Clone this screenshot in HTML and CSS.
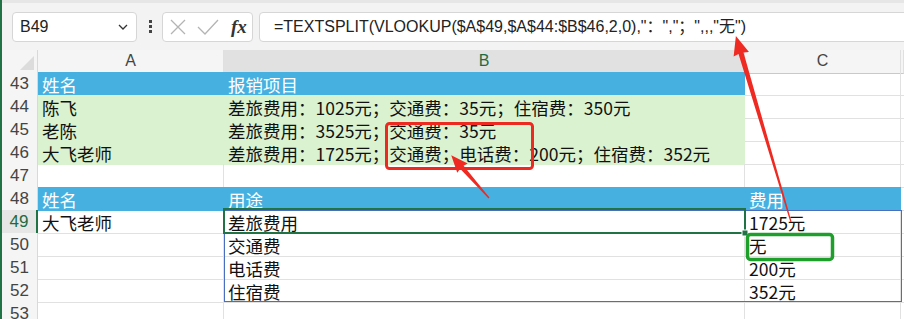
FILE: index.html
```html
<!DOCTYPE html>
<html lang="zh-CN">
<head>
    <meta charset="UTF-8">
    <title>TEXTSPLIT</title>
    <link rel="stylesheet" href="styles.css">
</head>
<body>
    <div class="app">
        <div class="formula-bar">
            <div class="name-box">
                <span>B49</span>
                <svg width="10" height="6" viewBox="0 0 10 6"><path d="M1 1 L5 5 L9 1" fill="none" stroke="#333" stroke-width="1.3"/></svg>
            </div>
            <div class="bar-dots"><i></i><i></i><i></i></div>
            <div class="fx-box">
                <svg width="16" height="16" viewBox="0 0 16 16"><path d="M1 1 L15 15 M15 1 L1 15" stroke="#b4b4b4" stroke-width="1.3"/></svg>
                <svg width="22" height="16" viewBox="0 0 22 16"><path d="M1 8 L8 15 L21 1" fill="none" stroke="#b4b4b4" stroke-width="1.3"/></svg>
                <span class="fx">fx</span>
            </div>
            <div class="formula-input">=TEXTSPLIT(VLOOKUP($A$49,$A$44:$B$46,2,0),"：","；",,,"无")</div>
        </div>

        <div class="sheet">
            <div class="row head-row">
                <div class="corner"><svg width="14" height="14" viewBox="0 0 14 14"><path d="M14 0 L14 14 L0 14 Z" fill="#dcdcdc"/></svg></div>
                <div class="ch">A</div>
                <div class="ch active">B</div>
                <div class="ch">C</div>
                <div class="ch"></div>
            </div>
            <div class="row">
                <div class="rh">43</div>
                <div class="cell blue">姓名</div>
                <div class="cell blue">报销项目</div>
                <div class="cell"></div>
                <div class="cell"></div>
            </div>
            <div class="row">
                <div class="rh">44</div>
                <div class="cell green">陈飞</div>
                <div class="cell green">差旅费用：1025元；交通费：35元；住宿费：350元</div>
                <div class="cell"></div>
                <div class="cell"></div>
            </div>
            <div class="row">
                <div class="rh">45</div>
                <div class="cell green">老陈</div>
                <div class="cell green">差旅费用：3525元；交通费：35元</div>
                <div class="cell"></div>
                <div class="cell"></div>
            </div>
            <div class="row">
                <div class="rh">46</div>
                <div class="cell green">大飞老师</div>
                <div class="cell green">差旅费用：1725元；交通费；电话费：200元；住宿费：352元</div>
                <div class="cell"></div>
                <div class="cell"></div>
            </div>
            <div class="row">
                <div class="rh">47</div>
                <div class="cell"></div>
                <div class="cell"></div>
                <div class="cell"></div>
                <div class="cell"></div>
            </div>
            <div class="row">
                <div class="rh">48</div>
                <div class="cell blue">姓名</div>
                <div class="cell blue">用途</div>
                <div class="cell blue">费用</div>
                <div class="cell"></div>
            </div>
            <div class="row">
                <div class="rh active">49</div>
                <div class="cell">大飞老师</div>
                <div class="cell">差旅费用</div>
                <div class="cell">1725元</div>
                <div class="cell"></div>
            </div>
            <div class="row">
                <div class="rh">50</div>
                <div class="cell"></div>
                <div class="cell">交通费</div>
                <div class="cell">无</div>
                <div class="cell"></div>
            </div>
            <div class="row">
                <div class="rh">51</div>
                <div class="cell"></div>
                <div class="cell">电话费</div>
                <div class="cell">200元</div>
                <div class="cell"></div>
            </div>
            <div class="row">
                <div class="rh">52</div>
                <div class="cell"></div>
                <div class="cell">住宿费</div>
                <div class="cell">352元</div>
                <div class="cell"></div>
            </div>
            <div class="row">
                <div class="rh">53</div>
                <div class="cell"></div>
                <div class="cell"></div>
                <div class="cell"></div>
                <div class="cell"></div>
            </div>
        </div>

        <!-- selection, spill range and the annotations drawn on top -->
        <svg class="marks" width="904" height="319" viewBox="0 0 904 319">
            <rect x="224.5" y="210.5" width="677" height="91" fill="none" stroke="#4a6fbf" stroke-width="1"/>
            <rect x="224" y="209" width="521" height="24" fill="none" stroke="#217346" stroke-width="2"/>
            <rect x="742" y="230" width="6" height="6" fill="#217346" stroke="#fff" stroke-width="1"/>

            <rect x="386.5" y="123.5" width="146" height="45" rx="3" fill="none" stroke="#ec2a22" stroke-width="3"/>
            <rect x="747.5" y="234.5" width="85" height="25" rx="3" fill="none" stroke="#1e9e2a" stroke-width="3.5"/>

            <polygon transform="translate(791 222) rotate(-106.5)" points="0,-0.6 176,-2.6 175,-8 194,0 175,8 176,2.6 0,0.6" fill="#ee2a22"/>
            <polygon transform="translate(489 198) rotate(-131.5)" points="0,-0.6 41,-2.3 40,-7 57,0 40,7 41,2.3 0,0.6" fill="#ee2a22"/>
        </svg>
    </div>
</body>
</html>
```

FILE: styles.css
```css
body {
    margin: 0;
    background-color: #fff;
    font-family: "Noto Sans CJK SC", sans-serif;
    overflow: hidden;
}

.app {
    position: relative;
    width: 904px;
    height: 319px;
    box-sizing: border-box;
    border-left: 2px solid #217346;
    overflow: hidden;
}

/* formula bar */
.formula-bar {
    height: 50px;
    box-sizing: border-box;
    border-top: 3px solid #e6e6e6;
    background-color: #f3f3f3;
    display: flex;
    align-items: center;
    padding-left: 10px;
}

.name-box {
    width: 125px;
    height: 30px;
    box-sizing: border-box;
    background-color: #fff;
    border: 1px solid #d6d6d6;
    border-radius: 4px;
    display: flex;
    align-items: center;
    justify-content: space-between;
    padding: 0 8px 0 7px;
    font-family: "Liberation Sans", sans-serif;
    font-size: 16px;
    color: #222;
}

.bar-dots {
    display: flex;
    flex-direction: column;
    gap: 2px;
    margin: 0 10px 0 12px;
}

.bar-dots i {
    display: block;
    width: 3px;
    height: 3px;
    background-color: #444;
}

.fx-box {
    width: 91px;
    height: 30px;
    box-sizing: border-box;
    background-color: #fff;
    border: 1px solid #d6d6d6;
    border-radius: 4px;
    display: flex;
    align-items: center;
    padding-left: 7px;
    gap: 11px;
}

.fx {
    font-family: "Liberation Serif", serif;
    font-style: italic;
    font-weight: bold;
    font-size: 19px;
    color: #333;
    margin-left: 1px;
}

.formula-input {
    flex: 1;
    height: 30px;
    box-sizing: border-box;
    margin: 0 -10px 0 6px;
    background-color: #fff;
    border: 1px solid #d6d6d6;
    border-radius: 4px;
    padding-left: 14px;
    font-family: "Liberation Sans", "Noto Sans CJK SC", sans-serif;
    font-size: 16px;
    line-height: 28px;
    color: #222;
    white-space: nowrap;
}

/* grid */
.row {
    display: grid;
    grid-template-columns: 36px 186px 521px 156px 1fr;
    height: 23px;
}

.head-row {
    height: 22px;
}

.corner {
    background-color: #f5f5f5;
    border-right: 1px solid #d9d9d9;
    border-bottom: 1px solid #c9c9c9;
    display: flex;
    align-items: flex-end;
    justify-content: flex-end;
    padding: 0 3px 3px 0;
}

.ch {
    background-color: #f5f5f5;
    border-right: 1px solid #e0e0e0;
    border-bottom: 1px solid #c9c9c9;
    text-align: center;
    font-family: "Liberation Sans", sans-serif;
    font-size: 16px;
    line-height: 22px;
    color: #444;
}

.ch.active {
    background-color: #e1e1e1;
    border-bottom: 2px solid #217346;
    color: #1e6b41;
}

.rh {
    box-sizing: border-box;
    background-color: #f5f5f5;
    border-right: 1px solid #d9d9d9;
    border-bottom: 1px solid #e1e1e1;
    text-align: center;
    font-family: "Liberation Sans", sans-serif;
    font-size: 17px;
    line-height: 23px;
    color: #444;
}

.rh.active {
    background-color: #e6e6e6;
    border-right: 2px solid #217346;
    color: #1e6b41;
}

.cell {
    box-sizing: border-box;
    border-right: 1px solid #e1e1e1;
    border-bottom: 1px solid #e1e1e1;
    padding: 3px 0 0 4px;
    font-size: 17.5px;
    line-height: 20px;
    color: #111;
    white-space: nowrap;
}

.cell.blue {
    background-color: #46b1e1;
    border-color: #46b1e1;
    color: #fff;
}

.cell.green {
    background-color: #daf2d0;
    border-color: #daf2d0;
}

.marks {
    position: absolute;
    left: -2px;
    top: 0;
    pointer-events: none;
}
```
